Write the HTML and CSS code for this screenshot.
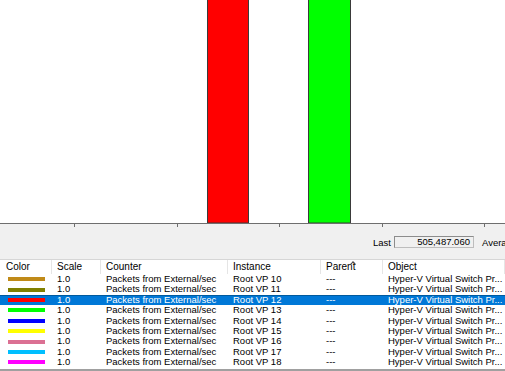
FILE: index.html
```html
<!DOCTYPE html>
<html lang="en">
<head>
    <meta charset="UTF-8">
    <title>Performance Monitor</title>
    <link rel="stylesheet" href="styles.css">
</head>
<body>

<div class="chart">
    <svg width="505" height="224" viewBox="0 0 505 224">
        <rect x="207.5" y="-2" width="41" height="225" fill="#ff0000" stroke="#3a3a3a"/>
        <rect x="308.5" y="-2" width="42" height="225" fill="#00ff00" stroke="#3a3a3a"/>
        <line x1="0" y1="223.5" x2="505" y2="223.5" stroke="#6e6e6e"/>
    </svg>
    <div class="ticks">
        <span class="tick" style="left:74px"></span>
        <span class="tick" style="left:177px"></span>
        <span class="tick" style="left:279px"></span>
        <span class="tick" style="left:382px"></span>
        <span class="tick" style="left:484px"></span>
    </div>
</div>

<div class="stats">
    <span class="label">Last</span>
    <span class="value">505,487.060</span>
    <span class="label">Average</span>
    <span class="value">505,487.060</span>
</div>

<div class="list">
    <div class="row head">
        <div class="cell">Color</div>
        <div class="cell">Scale</div>
        <div class="cell">Counter</div>
        <div class="cell">Instance</div>
        <div class="cell sorted">Parent</div>
        <div class="cell">Object</div>
    </div>
    <div class="row">
        <div class="cell"><span class="swatch" style="background:#c08a18"></span></div>
        <div class="cell">1.0</div><div class="cell">Packets from External/sec</div>
        <div class="cell">Root VP 10</div><div class="cell">---</div>
        <div class="cell">Hyper-V Virtual Switch Pr...</div>
    </div>
    <div class="row">
        <div class="cell"><span class="swatch" style="background:#808000"></span></div>
        <div class="cell">1.0</div><div class="cell">Packets from External/sec</div>
        <div class="cell">Root VP 11</div><div class="cell">---</div>
        <div class="cell">Hyper-V Virtual Switch Pr...</div>
    </div>
    <div class="row selected">
        <div class="cell"><span class="swatch" style="background:#ff0000"></span></div>
        <div class="cell">1.0</div><div class="cell">Packets from External/sec</div>
        <div class="cell">Root VP 12</div><div class="cell">---</div>
        <div class="cell">Hyper-V Virtual Switch Pr...</div>
    </div>
    <div class="row">
        <div class="cell"><span class="swatch" style="background:#00ff00"></span></div>
        <div class="cell">1.0</div><div class="cell">Packets from External/sec</div>
        <div class="cell">Root VP 13</div><div class="cell">---</div>
        <div class="cell">Hyper-V Virtual Switch Pr...</div>
    </div>
    <div class="row">
        <div class="cell"><span class="swatch" style="background:#0000ff"></span></div>
        <div class="cell">1.0</div><div class="cell">Packets from External/sec</div>
        <div class="cell">Root VP 14</div><div class="cell">---</div>
        <div class="cell">Hyper-V Virtual Switch Pr...</div>
    </div>
    <div class="row">
        <div class="cell"><span class="swatch" style="background:#ffff00"></span></div>
        <div class="cell">1.0</div><div class="cell">Packets from External/sec</div>
        <div class="cell">Root VP 15</div><div class="cell">---</div>
        <div class="cell">Hyper-V Virtual Switch Pr...</div>
    </div>
    <div class="row">
        <div class="cell"><span class="swatch" style="background:#db7093"></span></div>
        <div class="cell">1.0</div><div class="cell">Packets from External/sec</div>
        <div class="cell">Root VP 16</div><div class="cell">---</div>
        <div class="cell">Hyper-V Virtual Switch Pr...</div>
    </div>
    <div class="row">
        <div class="cell"><span class="swatch" style="background:#00bfff"></span></div>
        <div class="cell">1.0</div><div class="cell">Packets from External/sec</div>
        <div class="cell">Root VP 17</div><div class="cell">---</div>
        <div class="cell">Hyper-V Virtual Switch Pr...</div>
    </div>
    <div class="row">
        <div class="cell"><span class="swatch" style="background:#ff00ff"></span></div>
        <div class="cell">1.0</div><div class="cell">Packets from External/sec</div>
        <div class="cell">Root VP 18</div><div class="cell">---</div>
        <div class="cell">Hyper-V Virtual Switch Pr...</div>
    </div>
</div>

</body>
</html>
```

FILE: styles.css
```css
* {
    margin: 0;
    padding: 0;
    box-sizing: border-box;
}

body {
    width: 505px;
    height: 371px;
    overflow: hidden;
    background-color: #f0f0f0;
    font-family: 'Liberation Sans', Arial, sans-serif;
    font-size: 9.5px;
    color: #000;
}

.chart {
    position: relative;
    height: 224px;
    background-color: #ffffff;
}

.chart svg {
    display: block;
}

.tick {
    position: absolute;
    top: 224px;
    width: 1px;
    height: 3px;
    background-color: #6e6e6e;
}

.stats {
    display: flex;
    align-items: center;
    height: 35px;
    padding-left: 373px;
    padding-top: 1px;
    white-space: nowrap;
}

.stats .label {
    margin-right: 3px;
}

.stats .value {
    flex: none;
    width: 80px;
    height: 12px;
    line-height: 10px;
    margin-right: 8px;
    padding-right: 3px;
    text-align: right;
    border: 1px solid #bdbdbd;
    border-top-color: #8c8c8c;
    border-left-color: #8c8c8c;
    background-color: #f0f0f0;
}

.list {
    background-color: #ffffff;
    border-top: 1px solid #d6d6d6;
    border-bottom: 2px solid #a0a0a0;
    height: 112px;
}

.row {
    display: grid;
    grid-template-columns: 52px 49px 127px 93px 62px 1fr;
    height: 10.4px;
    line-height: 10.4px;
    white-space: nowrap;
}

.row .cell {
    padding-left: 5px;
    overflow: hidden;
}

.row .cell:first-child {
    padding-left: 8px;
    display: flex;
    align-items: center;
}

.head {
    height: 14px;
    line-height: 14px;
    font-size: 10px;
}

.head .cell {
    border-right: 1px solid #e5e5e5;
}

.head .cell:first-child {
    padding-left: 6px;
}

.sorted {
    position: relative;
}

.sorted::after {
    content: "";
    position: absolute;
    left: 30px;
    top: 2px;
    width: 3px;
    height: 3px;
    border-top: 1px solid #444;
    border-left: 1px solid #444;
    transform: rotate(45deg);
}

.swatch {
    display: block;
    width: 37px;
    height: 4px;
}

.selected {
    background-color: #0078d7;
    color: #ffffff;
    box-shadow: inset 0 1px 0 #005a9e;
}
```
